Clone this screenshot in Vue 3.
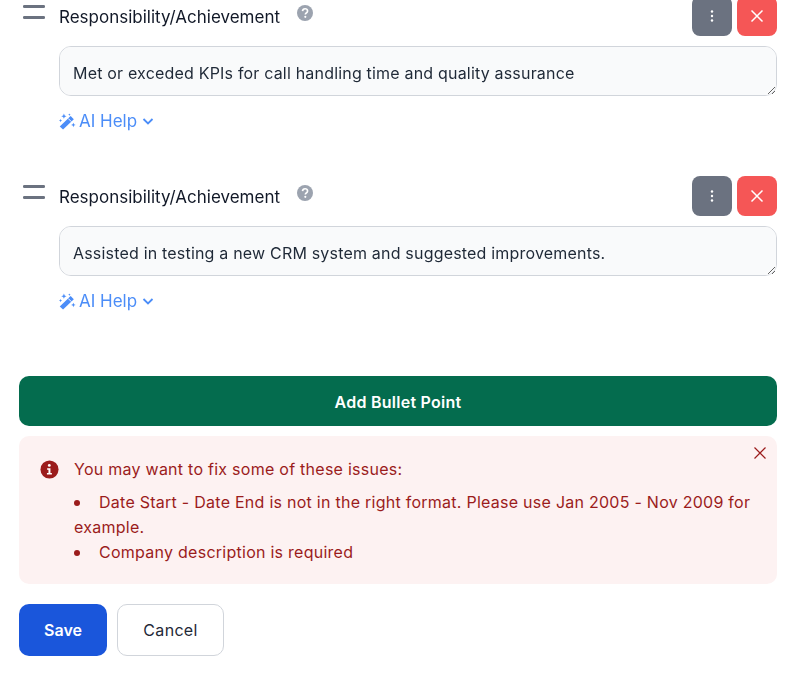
<template>
  <div class="page">
    <div v-for="(item, i) in items" :key="i" class="bullet">
      <div class="handle">
        <span></span>
        <span></span>
      </div>
      <div class="bullet-body">
        <div class="bullet-head">
          <label class="bullet-label">Responsibility/Achievement</label>
          <svg class="help-icon" viewBox="0 0 20 20" width="16" height="16">
            <circle cx="10" cy="10" r="10" fill="#9ca3af" />
            <path d="M6.900 7.600c.2-1.800 1.500-2.900 3.200-2.900 1.800 0 3.100 1.100 3.100 2.700 0 1.200-.6 1.900-1.600 2.500-.8.500-1.100.8-1.100 1.600v.3" fill="none" stroke="#fff" stroke-width="2.100" />
            <circle cx="10.400" cy="14.800" r="1.350" fill="#fff" />
          </svg>
          <div class="bullet-actions">
            <button class="square-btn grey">
              <svg viewBox="0 0 16 16" width="16" height="16">
                <circle cx="8" cy="3.500" r="1.200" fill="#fff" />
                <circle cx="8" cy="8" r="1.200" fill="#fff" />
                <circle cx="8" cy="12.500" r="1.200" fill="#fff" />
              </svg>
            </button>
            <button class="square-btn red">
              <svg viewBox="0 0 14 14" width="14" height="14">
                <path d="M1.500 1.500l11 11M12.500 1.500l-11 11" stroke="#fff" stroke-width="1.500" fill="none" />
              </svg>
            </button>
          </div>
        </div>
        <textarea class="bullet-text" rows="1" :value="item" spellcheck="false"></textarea>
        <div class="ai-help">
          <svg viewBox="0 0 18 18" width="17" height="17">
            <path d="M.8 14.200L12.300 3.300l3.400 3.400L4.300 17.600z" fill="#4b8df8" />
            <path d="M9.700 5.800l3.400 3.400" stroke="#fff" stroke-width="1" />
            <path d="M5.200 .6l.8 2 2 .8-2 .8-.8 2-.8-2-2-.8 2-.8zM15.200 10.200l.7 1.700 1.700.7-1.700.7-.7 1.700-.7-1.700-1.700-.7 1.700-.7zM1.600 6.300l.5 1.200 1.200.5-1.200.5-.5 1.200-.5-1.200L-.1 8l1.200-.5zM11 .4l.4 1 1 .4-1 .4-.4 1-.4-1-1-.4 1-.4z" fill="#4b8df8" />
          </svg>
          <span>AI Help</span>
          <svg viewBox="0 0 12 12" width="12" height="12">
            <path d="M1.500 4l4.500 4.500L10.500 4" fill="none" stroke="#4b8df8" stroke-width="1.800" />
          </svg>
        </div>
      </div>
    </div>

    <button class="add-btn">Add Bullet Point</button>

    <div class="alert">
      <svg class="alert-icon" viewBox="0 0 20 20" width="19" height="19">
        <circle cx="10" cy="10" r="9.500" fill="#9b1c1c" />
        <circle cx="9.800" cy="5.700" r="1.500" fill="#fff" />
        <path d="M7.500 8.600h3.500v5h1.500v1.700H7.300v-1.700h1.600V10.300H7.500z" fill="#fff" />
      </svg>
      <div class="alert-body">
        <div class="alert-title">You may want to fix some of these issues:</div>
        <ul class="alert-list">
          <li v-for="issue in issues" :key="issue">{{ issue }}</li>
        </ul>
      </div>
      <svg class="alert-close" viewBox="0 0 14 14" width="14" height="14">
        <path d="M1.500 1.500l11 11M12.500 1.500l-11 11" stroke="#9b1c1c" stroke-width="1.200" fill="none" />
      </svg>
    </div>

    <div class="form-actions">
      <button class="save-btn">Save</button>
      <button class="cancel-btn">Cancel</button>
    </div>
  </div>
</template>

<script setup>
const items = [
  'Met or exceded KPIs for call handling time and quality assurance',
  'Assisted in testing a new CRM system and suggested improvements.'
]

const issues = [
  'Date Start - Date End is not in the right format. Please use Jan 2005 - Nov 2009 for example.',
  'Company description is required'
]
</script>

<style>
html, body {
  background: #fff;
  overflow: hidden;
}
</style>

<style scoped>
.page {
  box-sizing: border-box;
  width: 794px;
  height: 682px;
  overflow: hidden;
  padding: 0 17px 0 19px;
  font-family: Inter, "Liberation Sans", sans-serif;
  color: #111827;
}

.bullet {
  display: flex;
  gap: 13px;
  height: 180px;
}

.bullet:first-child {
  margin-top: -4px;
}

.handle {
  flex: none;
  display: flex;
  flex-direction: column;
  gap: 8.5px;
  width: 27px;
  padding: 9px 0 0 4px;
  box-sizing: border-box;
}

.handle span {
  display: block;
  width: 22px;
  height: 2.5px;
  background: #6b7280;
  border-radius: 1.25px;
}

.bullet-body {
  flex: 1;
  min-width: 0;
}

.bullet-head {
  display: flex;
  align-items: flex-start;
  height: 50px;
}

.bullet-label {
  margin-top: 11px;
  font-size: 17px;
  line-height: 20px;
  color: #111827;
}

.help-icon {
  margin: 9px 0 0 17px;
}

.bullet-actions {
  margin-left: auto;
  display: flex;
  gap: 5px;
}

.square-btn {
  width: 40px;
  height: 40px;
  border: 0;
  border-radius: 8px;
  padding: 0;
  display: flex;
  align-items: center;
  justify-content: center;
}

.square-btn.grey {
  background: #6b7280;
}

.square-btn.red {
  background: #f55656;
}

.bullet-text {
  display: block;
  box-sizing: border-box;
  width: 100%;
  height: 50px;
  padding: 15px 13px;
  border: 1px solid #d1d5db;
  border-radius: 12px;
  background: #f9fafb;
  font-family: inherit;
  font-size: 16px;
  letter-spacing: 0.19px;
  line-height: 22px;
  color: #1f2937;
  outline: none;
}

.ai-help {
  display: flex;
  align-items: center;
  gap: 3px;
  margin-top: 15px;
  font-size: 17px;
  line-height: 20px;
  color: #4b8df8;
}

.ai-help span {
  margin-right: 2px;
}

.add-btn {
  display: block;
  width: 100%;
  height: 50px;
  margin-top: 20px;
  padding: 2px 0 0;
  border: 0;
  border-radius: 10px;
  background: #046c4e;
  color: #fff;
  font-family: inherit;
  font-size: 16px;
  font-weight: 600;
  letter-spacing: 0.25px;
}

.alert {
  position: relative;
  display: flex;
  gap: 15px;
  height: 148px;
  box-sizing: border-box;
  margin-top: 10px;
  padding: 22px 21px 0;
  border-radius: 10px;
  background: #fdf2f2;
  color: #9b1c1c;
  font-size: 16px;
  letter-spacing: 0.26px;
}

.alert-icon {
  flex: none;
  margin-top: 2px;
}

.alert-title {
  line-height: 22px;
}

.alert-list {
  margin: 10px 0 0;
  padding: 0;
  list-style: none;
  line-height: 25px;
}

.alert-list li::before {
  content: "";
  display: inline-block;
  width: 6px;
  height: 6px;
  margin-right: 19px;
  border-radius: 50%;
  background: currentColor;
  vertical-align: 2px;
}

.alert-close {
  position: absolute;
  top: 10px;
  right: 10px;
}

.form-actions {
  display: flex;
  gap: 10px;
  margin-top: 20px;
}

.save-btn {
  width: 88px;
  height: 52px;
  border: 0;
  border-radius: 10px;
  background: #1a56db;
  color: #fff;
  font-family: inherit;
  font-size: 16px;
  font-weight: 600;
}

.cancel-btn {
  width: 107px;
  height: 52px;
  border: 1px solid #d1d5db;
  border-radius: 10px;
  background: #fff;
  color: #1f2937;
  font-family: inherit;
  font-size: 16px;
  letter-spacing: 0.3px;
}
</style>
